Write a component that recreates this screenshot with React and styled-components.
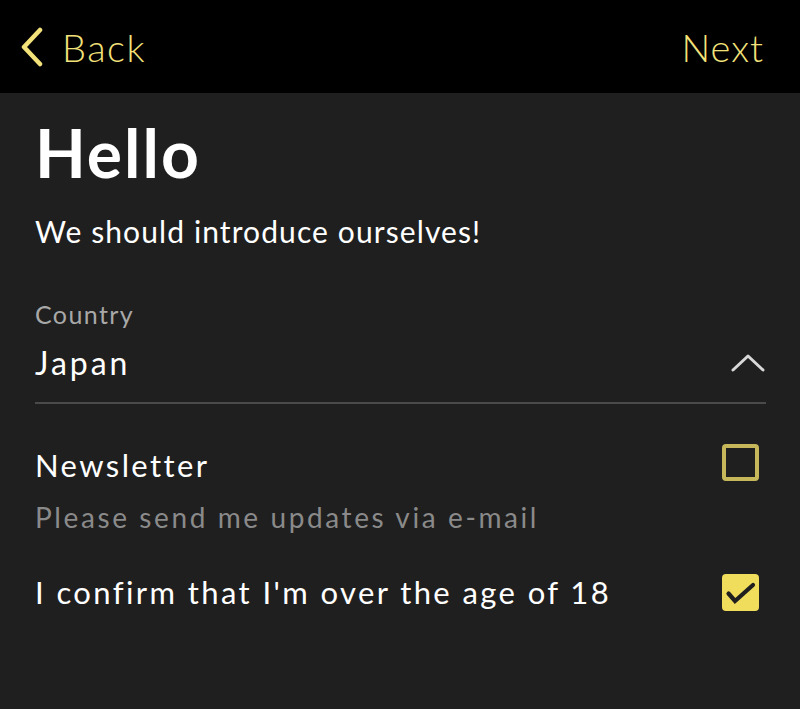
import React from "react";
import styled, { createGlobalStyle } from "styled-components";

const Global = createGlobalStyle`
  html, body { margin: 0; padding: 0; background: #1f1f1f; }
  body { font-family: Lato, "Open Sans", sans-serif; }
`;

const Page = styled.div`
  width: 800px;
  height: 709px;
  background: #1f1f1f;
  display: flex;
  flex-direction: column;
`;

const TopBar = styled.header`
  height: 93px;
  background: #000;
  display: flex;
  align-items: center;
  justify-content: space-between;
  padding: 0 36px 0 20px;
  box-sizing: border-box;
`;

const NavButton = styled.button`
  background: none;
  border: none;
  padding: 0;
  display: flex;
  align-items: center;
  gap: 18px;
  color: #f3e27a;
  font-family: Lato, sans-serif;
  font-weight: 300;
  font-size: 38px;
  letter-spacing: ${(p) => p.$ls}px;
  cursor: pointer;
`;

const Content = styled.main`
  padding: 24px 34px 0 35px;
  display: flex;
  flex-direction: column;
`;

const Title = styled.h1`
  margin: 0;
  color: #fff;
  font-size: 66px;
  font-weight: 700;
  letter-spacing: 2px;
  line-height: 72px;
`;

const Subtitle = styled.p`
  margin: 24px 0 0;
  color: #fff;
  font-size: 30px;
  letter-spacing: 1.1px;
  line-height: 36px;
`;

const Field = styled.div`
  margin-top: 50px;
  border-bottom: 2px solid #4a4a4a;
  padding-bottom: 19px;
`;

const Label = styled.div`
  color: #a8a8a8;
  font-size: 25px;
  letter-spacing: 1.4px;
  line-height: 30px;
`;

const SelectRow = styled.div`
  margin-top: 14px;
  display: flex;
  align-items: center;
  justify-content: space-between;
  color: #fff;
  font-size: 32px;
  letter-spacing: 3px;
  line-height: 40px;
`;

const CheckRow = styled.div`
  display: flex;
  align-items: ${(p) => (p.$top ? "flex-start" : "center")};
  justify-content: space-between;
  margin-top: ${(p) => p.$mt}px;
`;

const RowText = styled.div`
  display: flex;
  flex-direction: column;
`;

const RowTitle = styled.div`
  color: #fff;
  font-size: 31px;
  letter-spacing: 2.4px;
  line-height: 38px;
`;

const RowHint = styled.div`
  color: #8a8a8a;
  font-size: 28px;
  letter-spacing: 2.6px;
  line-height: 36px;
  margin-top: 15px;
`;

const Box = styled.div`
  width: 37px;
  height: 37px;
  box-sizing: border-box;
  border-radius: 4px;
  margin-right: 7px;
  margin-top: ${(p) => (p.$checked ? 0 : -2)}px;
  flex-shrink: 0;
  display: flex;
  border: ${(p) => (p.$checked ? "none" : "4px solid #c6b85a")};
  background: ${(p) => (p.$checked ? "#f1dd5c" : "transparent")};
`;

const Chevron = ({ d, color, w, h, sw }) => (
  <svg width={w} height={h} viewBox={`0 0 ${w} ${h}`} fill="none">
    <path d={d} stroke={color} strokeWidth={sw} strokeLinecap="round" strokeLinejoin="round" />
  </svg>
);

export default function App() {
  return (
    <>
      <Global />
      <Page>
        <TopBar>
          <NavButton $ls={1.5}>
            <Chevron w={24} h={40} d="M20 3 L4 20 L20 37" color="#f3e27a" sw={4.5} />
            Back
          </NavButton>
          <NavButton $ls={1}>Next</NavButton>
        </TopBar>
        <Content>
          <Title>Hello</Title>
          <Subtitle>We should introduce ourselves!</Subtitle>
          <Field>
            <Label>Country</Label>
            <SelectRow>
              Japan
              <Chevron w={36} h={22} d="M3 18 L18 4 L33 18" color="#d8d8d8" sw={3} />
            </SelectRow>
          </Field>
          <CheckRow $top $mt={42}>
            <RowText>
              <RowTitle>Newsletter</RowTitle>
              <RowHint>Please send me updates via e-mail</RowHint>
            </RowText>
            <Box />
          </CheckRow>
          <CheckRow $mt={38}>
            <RowTitle>I confirm that I'm over the age of 18</RowTitle>
            <Box $checked>
              <svg width="37" height="37" viewBox="0 0 37 37" fill="none">
                <path d="M6.5 19.5 L13 27 L31 11" stroke="#1f1f1f" strokeWidth="4.2" strokeLinecap="round" strokeLinejoin="miter" />
              </svg>
            </Box>
          </CheckRow>
        </Content>
      </Page>
    </>
  );
}
